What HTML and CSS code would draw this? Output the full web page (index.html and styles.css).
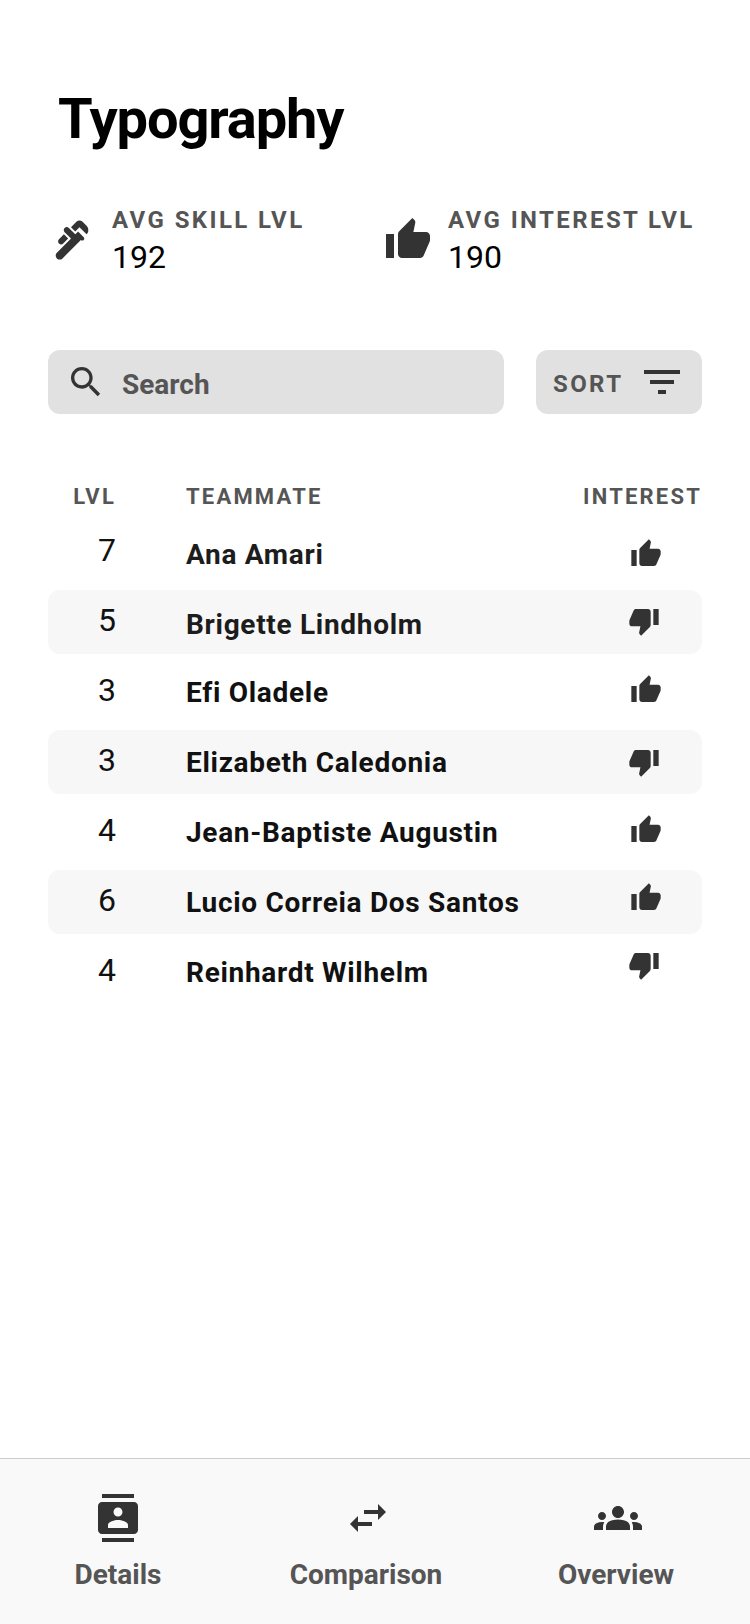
FILE: index.html
```html
<!DOCTYPE html>
<html lang="en">
<head>
<meta charset="utf-8">
<title>Typography</title>
<link rel="stylesheet" href="styles.css">
</head>
<body>
<svg class="sprite" width="0" height="0" aria-hidden="true">
  <symbol id="up" viewBox="0 0 24 24"><path d="M1 21h4V9H1v12zm22-11c0-1.1-.9-2-2-2h-6.31l.95-4.57.03-.32c0-.41-.17-.79-.44-1.06L14.17 1 7.59 7.59C7.22 7.95 7 8.45 7 9v10c0 1.1.9 2 2 2h9c.83 0 1.54-.5 1.84-1.22l3.02-7.05c.09-.23.14-.47.14-.73v-2z"/></symbol>
  <symbol id="down" viewBox="0 0 24 24"><path d="M15 3H6c-.83 0-1.54.5-1.84 1.22l-3.02 7.05c-.09.23-.14.47-.14.73v2c0 1.1.9 2 2 2h6.31l-.95 4.57-.03.32c0 .41.17.79.44 1.06L9.83 23l6.59-6.59c.36-.36.58-.86.58-1.41V5c0-1.1-.9-2-2-2zm4 0v12h4V3h-4z"/></symbol>
</svg>
<main class="main">
  <h1 class="title">Typography</h1>
  <section class="stats">
    <div class="stat stat-skill">
      <svg class="icon-lg stat-icon" viewBox="0 0 24 24"><path d="M19.28,4.93l-2.12-2.12c-0.78-0.78-2.05-0.78-2.83,0L11.5,5.64l2.12,2.12l2.12-2.12l3.54,3.54C20.45,8.4,20.45,6.1,19.28,4.93z"/><path d="M5.49,13.77c0.59,0.59,1.54,0.59,2.12,0l2.47-2.47L7.96,9.17l-2.47,2.47C4.9,12.23,4.9,13.18,5.49,13.77L5.49,13.77z"/><path d="M15.04,7.76l-0.71,0.71l-0.71,0.71l-3.18-3.18C9.85,5.4,8.9,5.4,8.32,5.99c-0.59,0.59-0.59,1.54,0,2.12l3.18,3.18L10.79,12l-6.36,6.36c-0.78,0.78-0.78,2.05,0,2.83c0.78,0.78,2.05,0.78,2.83,0L16.45,12c0.39,0.39,1.02,0.39,1.41,0c0.39-0.39,0.39-1.02,0-1.41L15.04,7.76z"/></svg>
      <div class="stat-text"><div class="caps stat-label">AVG SKILL LVL</div><div class="stat-value">192</div></div>
    </div>
    <div class="stat">
      <svg class="icon-lg stat-icon"><use href="#up"/></svg>
      <div class="stat-text"><div class="caps stat-label">AVG INTEREST LVL</div><div class="stat-value">190</div></div>
    </div>
  </section>
  <section class="tools">
    <div class="search">
      <svg class="icon-search" viewBox="0 0 24 24"><path d="M15.5 14h-.79l-.28-.27C15.41 12.59 16 11.11 16 9.5 16 5.91 13.09 3 9.5 3S3 5.91 3 9.5 5.91 16 9.5 16c1.61 0 3.09-.59 4.23-1.57l.27.28v.79l5 4.99L20.49 19l-4.99-5zm-6 0C7.01 14 5 11.99 5 9.5S7.01 5 9.5 5 14 7.01 14 9.5 11.99 14 9.5 14z"/></svg>
      <span class="search-text">Search</span>
    </div>
    <div class="sort">
      <span class="caps sort-text">SORT</span>
      <svg class="icon-lg" viewBox="0 0 24 24"><path d="M10 18h4v-2h-4v2zM3 6v2h18V6H3zm3 7h12v-2H6v2z"/></svg>
    </div>
  </section>
  <section class="table">
    <div class="head caps"><span class="col-lvl">LVL</span><span class="col-name">TEAMMATE</span><span>INTEREST</span></div>
    <div class="rows">
      <div class="row"><span class="col-lvl num">7</span><span class="col-name name name-low">Ana Amari</span><svg class="thumb t18"><use href="#up"/></svg></div>
      <div class="row alt"><span class="col-lvl num">5</span><span class="col-name name name-low">Brigette Lindholm</span><svg class="thumb thumb-down t15"><use href="#down"/></svg></div>
      <div class="row"><span class="col-lvl num">3</span><span class="col-name name">Efi Oladele</span><svg class="thumb t14"><use href="#up"/></svg></div>
      <div class="row alt"><span class="col-lvl num">3</span><span class="col-name name">Elizabeth Caledonia</span><svg class="thumb thumb-down t16"><use href="#down"/></svg></div>
      <div class="row"><span class="col-lvl num">4</span><span class="col-name name">Jean-Baptiste Augustin</span><svg class="thumb t14"><use href="#up"/></svg></div>
      <div class="row alt"><span class="col-lvl num">6</span><span class="col-name name">Lucio Correia Dos Santos</span><svg class="thumb t12"><use href="#up"/></svg></div>
      <div class="row"><span class="col-lvl num">4</span><span class="col-name name">Reinhardt Wilhelm</span><svg class="thumb thumb-down t9"><use href="#down"/></svg></div>
    </div>
  </section>
</main>
<nav class="nav">
  <div class="nav-item">
    <svg class="icon-lg" viewBox="0 0 24 24"><path d="M20 0H4v2h16V0zM4 24h16v-2H4v2zM20 4H4c-1.1 0-2 .9-2 2v12c0 1.1.9 2 2 2h16c1.1 0 2-.9 2-2V6c0-1.1-.9-2-2-2zm-8 2.75c1.24 0 2.25 1.01 2.25 2.25s-1.01 2.25-2.25 2.25S9.75 10.24 9.75 9 10.76 6.75 12 6.75zM17 17H7v-1.5c0-1.67 3.33-2.5 5-2.5s5 .83 5 2.5V17z"/></svg>
    <span>Details</span>
  </div>
  <div class="nav-item">
    <svg class="icon-lg icon-shift" viewBox="0 0 24 24"><path d="M6.99 11L3 15l3.99 4v-3H14v-2H6.99v-3zM21 9l-3.99-4v3H10v2h7.01v3L21 9z"/></svg>
    <span>Comparison</span>
  </div>
  <div class="nav-item">
    <svg class="icon-lg icon-shift" viewBox="0 0 24 24"><path d="M4,13c1.1,0,2-0.9,2-2c0-1.1-0.9-2-2-2s-2,0.9-2,2C2,12.1,2.9,13,4,13z M5.13,14.1C4.76,14.04,4.39,14,4,14c-0.99,0-1.93,0.21-2.78,0.58C0.48,14.9,0,15.62,0,16.43V18l4.5,0v-1.61C4.5,15.56,4.73,14.78,5.13,14.1z M20,13c1.1,0,2-0.9,2-2c0-1.1-0.9-2-2-2s-2,0.9-2,2C18,12.1,18.9,13,20,13z M24,16.43c0-0.81-0.48-1.53-1.22-1.85C21.93,14.21,20.99,14,20,14c-0.39,0-0.76,0.04-1.13,0.1c0.4,0.68,0.63,1.46,0.63,2.29V18l4.5,0V16.43z M16.24,13.65c-1.17-0.52-2.61-0.9-4.24-0.9c-1.63,0-3.07,0.39-4.24,0.9C6.68,14.13,6,15.21,6,16.39V18h12v-1.61C18,15.21,17.32,14.13,16.24,13.65z M12,12c1.66,0,3-1.34,3-3c0-1.66-1.34-3-3-3S9,7.34,9,9C9,10.66,10.34,12,12,12z"/></svg>
    <span>Overview</span>
  </div>
</nav>
</body>
</html>
```
FILE: styles.css
```css
* { box-sizing: border-box; }
html, body { margin: 0; height: 100%; }
body {
  width: 750px;
  height: 1624px;
  display: flex;
  flex-direction: column;
  background: #fff;
  font-family: Roboto, sans-serif;
  overflow: hidden;
}
.sprite { position: absolute; }
svg { display: block; flex: none; fill: #333; }
.main { flex: 1; padding: 0 48px; }
.title {
  margin: 0;
  padding: 87px 0 0 10px;
  height: 200px;
  font-size: 56px;
  line-height: 64px;
  font-weight: 700;
  letter-spacing: -1.1px;
  color: #000;
}
.caps {
  font-weight: 700;
  font-size: 22px;
  letter-spacing: 2.2px;
  color: #555;
}
.icon-lg { width: 48px; height: 48px; }
.stats { display: flex; height: 150px; padding-top: 4px; }
.stat { display: flex; gap: 16px; align-items: flex-start; }
.stat-skill { width: 336px; }
.stat-icon { margin-top: 12px; }
.stat-label { font-size: 24px; line-height: 32px; letter-spacing: 2.4px; margin-bottom: 3px; }
.stat-value { font-size: 32px; line-height: 36px; color: #000; }
.tools { display: flex; justify-content: space-between; height: 64px; }
.search, .sort {
  display: flex;
  align-items: center;
  height: 64px;
  background: #e1e1e1;
  border-radius: 12px;
}
.search { width: 456px; padding-left: 18px; }
.icon-search { width: 40px; height: 40px; }
.search-text { margin-left: 16px; padding-top: 4px; font-size: 28px; font-weight: 700; color: #555; }
.sort { width: 166px; padding: 0 16px 0 17px; justify-content: space-between; }
.sort-text { font-size: 24px; letter-spacing: 2.4px; padding-top: 4px; }
.table { padding-top: 68px; }
.head { display: flex; align-items: center; height: 38px; padding-bottom: 10px; }
.col-lvl { width: 68px; text-align: right; flex: none; }
.col-name { margin-left: 70px; flex: 1; }
.rows { display: flex; flex-direction: column; gap: 6px; }
.row { display: flex; align-items: center; height: 64px; border-radius: 12px; padding-right: 40px; }
.alt { background: #f7f7f7; }
.num { font-size: 32px; color: #111; padding-bottom: 4px; }
.name {
  font-size: 28px;
  font-weight: 700;
  color: #111;
  letter-spacing: 0.7px;
  font-variant-ligatures: common-ligatures;
}
.name-low { padding-top: 4px; color: #1c1c1c; }
.thumb { width: 32px; height: 32px; align-self: flex-start; }
.thumb-down { margin-right: 2px; }
.t9 { margin-top: 9px; }
.t12 { margin-top: 12px; }
.t14 { margin-top: 14px; }
.t15 { margin-top: 15px; }
.t16 { margin-top: 16px; }
.t18 { margin-top: 18px; }
.nav {
  height: 166px;
  flex: none;
  display: grid;
  grid-template-columns: 236px 260px 240px;
  background: #f9f9f9;
  border-top: 1px solid #ccc;
  padding-top: 35px;
}
.nav-item {
  display: flex;
  flex-direction: column;
  align-items: center;
  font-size: 28px;
  font-weight: 700;
  color: #555;
}
.nav-item span { line-height: 32px; margin-top: 17px; }
.icon-shift { margin-left: 4px; }
```
